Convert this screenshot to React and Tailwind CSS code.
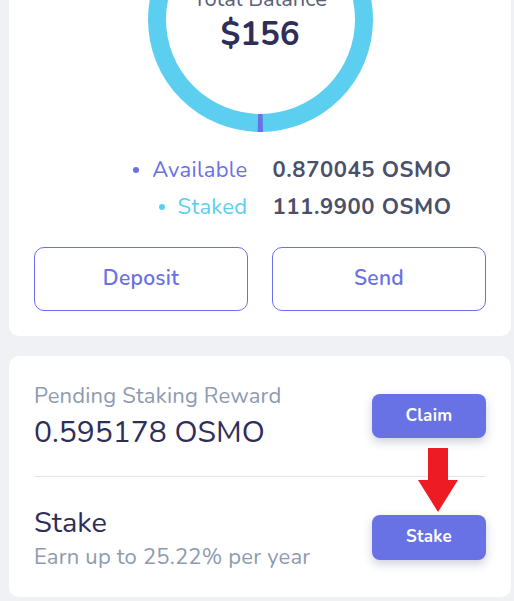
import React from 'react'

const FONT = { fontFamily: 'Nunito, Lato, "Open Sans", sans-serif' }

function Donut() {
  const r = 103.5
  const c = 2 * Math.PI * r
  const seg = 5
  return (
    <div className="relative w-[225px] h-[225px]">
      <svg width="225" height="225" viewBox="0 0 225 225">
        <circle cx="112.5" cy="112.5" r={r} fill="none" stroke="#5ccff0" strokeWidth="18" />
        {/* staked vs available sliver, bottom of ring */}
        <circle
          cx="112.5"
          cy="112.5"
          r={r}
          fill="none"
          stroke="#6a70e6"
          strokeWidth="18"
          strokeDasharray={`${seg} ${c - seg}`}
          strokeDashoffset={-(c / 4 - seg / 2)}
        />
      </svg>
      <div className="absolute inset-0 flex flex-col items-center justify-center">
        <p className="text-[22px] text-[#5b6078] leading-none">Total Balance</p>
        <p className="text-[33px] font-bold text-[#2f2d5a] leading-none mt-[8px]">$156</p>
      </div>
    </div>
  )
}

export default function App() {
  return (
    <div className="h-screen bg-[#f0f1f5] overflow-hidden pl-[9px] pr-[3px]" style={FONT}>
      {/* balance card, scrolled partly out of view */}
      <div className="-mt-[124px] bg-white rounded-[10px] pt-[31px] pb-[25px] px-[25px] flex flex-col items-center">
        <Donut />

        <div className="grid grid-cols-[1fr_1fr] gap-x-[25px] gap-y-[9px] mt-[24px] w-full text-[22px] leading-[28px]">
          <div className="flex items-center justify-end gap-[13px] text-[#6a70e6] tracking-[0.3px]">
            <span className="w-[6px] h-[6px] rounded-full bg-[#6a70e6]" />
            Available
          </div>
          <div className="font-bold text-[#4a5069] tracking-[0.6px]">0.870045 OSMO</div>
          <div className="flex items-center justify-end gap-[13px] text-[#5ccff0] tracking-[0.3px]">
            <span className="w-[6px] h-[6px] rounded-full bg-[#5ccff0]" />
            Staked
          </div>
          <div className="font-bold text-[#4a5069] tracking-[0.6px]">111.9900 OSMO</div>
        </div>

        <div className="grid grid-cols-2 gap-[24px] w-full mt-[26px]">
          <button className="h-[64px] rounded-[10px] border border-[#6a70e6] text-[#6a70e6] text-[21px] font-semibold bg-white tracking-[0.3px]">
            Deposit
          </button>
          <button className="h-[64px] rounded-[10px] border border-[#6a70e6] text-[#6a70e6] text-[21px] font-semibold bg-white tracking-[0.3px]">
            Send
          </button>
        </div>
      </div>

      {/* rewards card */}
      <div className="relative mt-[20px] bg-white rounded-[10px] px-[25px]">
        <div className="h-[121px] flex items-center justify-between border-b border-[#e4e6eb]">
          <div>
            <p className="text-[22px] text-[#8d9ab0] leading-[30px] tracking-[0.2px]">Pending Staking Reward</p>
            <p className="text-[30px] text-[#2f2d5a] leading-[36px] mt-[4px]">0.595178 OSMO</p>
          </div>
          <button className="w-[114px] h-[44px] rounded-[8px] bg-[#6872e4] text-white text-[17px] font-bold tracking-[0.3px] shadow-[0_4px_10px_rgba(60,70,120,0.25)]">
            Claim
          </button>
        </div>
        <div className="h-[120px] flex items-center justify-between">
          <div className="mt-[3px]">
            <p className="text-[29px] text-[#2f2d5a] leading-[34px]">Stake</p>
            <p className="text-[22px] text-[#8d9ab0] leading-[30px] mt-[2px] tracking-[0.2px]">Earn up to 25.22% per year</p>
          </div>
          <button className="w-[114px] h-[45px] rounded-[8px] bg-[#6872e4] text-white text-[17px] font-bold tracking-[0.3px] shadow-[0_4px_10px_rgba(60,70,120,0.25)]">
            Stake
          </button>
        </div>

        {/* red annotation arrow */}
        <svg className="absolute left-[409px] top-[92px]" width="40" height="64" viewBox="0 0 40 64">
          <rect x="10" y="0" width="20" height="33" fill="#ed1c24" />
          <polygon points="0,32 40,32 20,64" fill="#ed1c24" />
        </svg>
      </div>
    </div>
  )
}
